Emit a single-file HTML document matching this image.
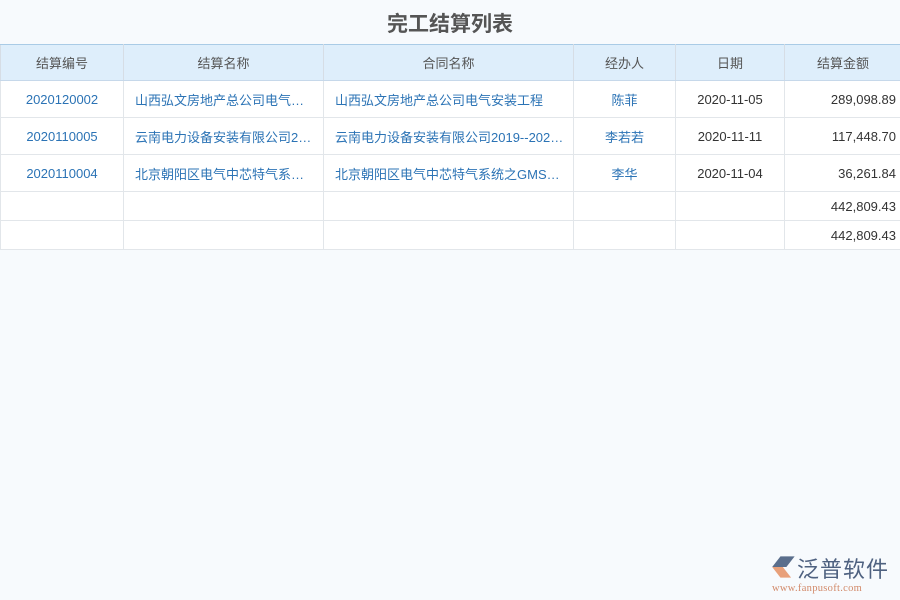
<!DOCTYPE html><html><head><meta charset="utf-8"><style>
body{margin:0;width:900px;height:600px;background:#f7fafd;font-family:"Liberation Sans","Noto Sans CJK SC",sans-serif;position:relative;overflow:hidden}
h1{margin:0;position:absolute;top:8px;left:0;width:900px;text-align:center;font-size:21px;color:#555;font-weight:bold}
table{position:absolute;top:44px;left:0;border-collapse:collapse;width:901px;table-layout:fixed;font-size:13px}
th{background:#deeefb;color:#555;font-weight:normal;height:35px;padding:0;border:1px solid #d6dde5;border-top:1px solid #a9cbe6;border-bottom:1px solid #c6d8ea}
td{height:36px;padding:0;border:1px solid #e2e6ea;text-align:center;color:#333;background:#fff;white-space:nowrap;overflow:hidden}
tr.s td{height:28px}
td.l{text-align:left;padding-left:11px;color:#2b73b5}
td.b{color:#2b73b5}
td.r{text-align:right;padding-right:5px}
</style></head><body>
<h1>完工结算列表</h1>
<table>
<colgroup><col style="width:123px"><col style="width:200px"><col style="width:250px"><col style="width:102px"><col style="width:109px"><col style="width:117px"></colgroup>
<tr><th>结算编号</th><th>结算名称</th><th>合同名称</th><th>经办人</th><th>日期</th><th>结算金额</th></tr>
<tr><td class="b">2020120002</td><td class="l">山西弘文房地产总公司电气…</td><td class="l">山西弘文房地产总公司电气安装工程</td><td class="b">陈菲</td><td>2020-11-05</td><td class="r">289,098.89</td></tr>
<tr><td class="b">2020110005</td><td class="l">云南电力设备安装有限公司2…</td><td class="l">云南电力设备安装有限公司2019--202…</td><td class="b">李若若</td><td>2020-11-11</td><td class="r">117,448.70</td></tr>
<tr><td class="b">2020110004</td><td class="l">北京朝阳区电气中芯特气系…</td><td class="l">北京朝阳区电气中芯特气系统之GMS…</td><td class="b">李华</td><td>2020-11-04</td><td class="r">36,261.84</td></tr>
<tr class="s"><td></td><td></td><td></td><td></td><td></td><td class="r">442,809.43</td></tr>
<tr class="s"><td></td><td></td><td></td><td></td><td></td><td class="r">442,809.43</td></tr>
</table>
<div style="position:absolute;left:771px;top:554px;width:26px;height:26px">
<svg width="26" height="26" viewBox="0 0 22 22"><path d="M1 11 L8 2 L20 2 L13 11 Z" fill="#5a6e8c"/><path d="M1 11 L8 20 L17 20 L10 11 Z" fill="#e8a07a"/></svg></div>
<div style="position:absolute;left:797px;top:552px;font-size:22px;color:#4e6180;letter-spacing:1px">泛普软件</div>
<div style="position:absolute;left:772px;top:583px;font-size:10.5px;color:#d28a6a;font-family:'Liberation Serif',serif;letter-spacing:0.3px">www.fanpusoft.com</div>
</body></html>
